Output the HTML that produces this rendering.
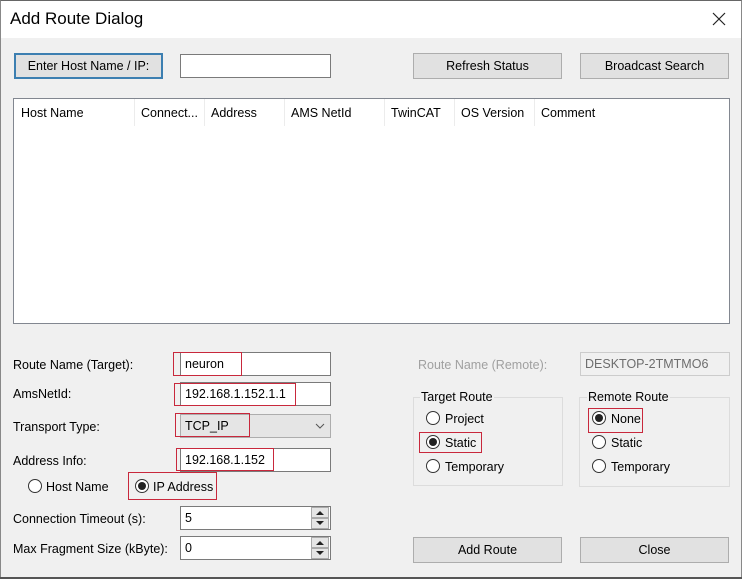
<!DOCTYPE html>
<html><head><style>
*{box-sizing:border-box;margin:0;padding:0}
body{width:742px;height:579px;overflow:hidden;background:#f0f0f0;font-family:"Liberation Sans",sans-serif;font-size:12.5px;color:#000;position:relative}
.a{position:absolute;white-space:nowrap}
.title{left:0;top:0;width:742px;height:38px;background:#fff;border-left:1px solid #888;border-right:1px solid #888;border-top:1px solid #666}
.btn{position:absolute;background:#e1e1e1;border:1px solid #adadad;text-align:center;line-height:24px}
.inp{position:absolute;background:#fff;border:1px solid #7a7a7a;padding-left:4px;line-height:23px}
.red{position:absolute;border:1px solid #c8283c}
.lbl{position:absolute;line-height:16px}
.rad{position:absolute;width:14px;height:14px;border:1px solid #333;border-radius:50%;background:#fff}
.rad.on::after{content:"";position:absolute;left:2px;top:2px;width:8px;height:8px;border-radius:50%;background:#222}
.grp{position:absolute;border:1px solid #dcdcdc}
.gt{position:absolute;background:#f0f0f0;padding:0 1px;line-height:16px}
.sep{position:absolute;top:99px;width:1px;height:27px;background:#ececec}
</style></head><body>
<div class="a title"></div>
<div class="a" style="left:10px;top:9px;font-size:17px">Add Route Dialog</div>
<svg class="a" style="left:712px;top:12px" width="14" height="14"><path d="M1 1L13 13M13 1L1 13" stroke="#222" stroke-width="1.2"/></svg>
<div class="a" style="left:0;top:38px;width:1px;height:541px;background:#888"></div>
<div class="a" style="left:741px;top:38px;width:1px;height:541px;background:#888"></div>

<div class="btn" style="left:14px;top:53px;width:149px;height:26px;border:2px solid #3c7fb1;line-height:22px">Enter Host Name / IP:</div>
<div class="inp" style="left:180px;top:54px;width:151px;height:24px"></div>
<div class="btn" style="left:413px;top:53px;width:149px;height:26px">Refresh Status</div>
<div class="btn" style="left:580px;top:53px;width:149px;height:26px">Broadcast Search</div>

<div class="a" style="left:13px;top:98px;width:717px;height:226px;background:#fff;border:1px solid #828790"></div>
<div class="sep" style="left:134px"></div><div class="sep" style="left:204px"></div><div class="sep" style="left:284px"></div><div class="sep" style="left:384px"></div><div class="sep" style="left:454px"></div><div class="sep" style="left:534px"></div>
<div class="lbl" style="left:21px;top:105px">Host Name</div>
<div class="lbl" style="left:141px;top:105px">Connect...</div>
<div class="lbl" style="left:211px;top:105px">Address</div>
<div class="lbl" style="left:291px;top:105px">AMS NetId</div>
<div class="lbl" style="left:391px;top:105px">TwinCAT</div>
<div class="lbl" style="left:461px;top:105px">OS Version</div>
<div class="lbl" style="left:541px;top:105px">Comment</div>

<div class="lbl" style="left:13px;top:357px">Route Name (Target):</div>
<div class="lbl" style="left:13px;top:386px">AmsNetId:</div>
<div class="lbl" style="left:13px;top:419px">Transport Type:</div>
<div class="lbl" style="left:13px;top:453px">Address Info:</div>
<div class="lbl" style="left:13px;top:511px">Connection Timeout (s):</div>
<div class="lbl" style="left:13px;top:541px">Max Fragment Size (kByte):</div>

<div class="inp" style="left:180px;top:352px;width:151px;height:24px">neuron</div>
<div class="inp" style="left:180px;top:382px;width:151px;height:24px">192.168.1.152.1.1</div>
<div class="inp" style="left:180px;top:414px;width:151px;height:24px;background:#e5e5e5;border-color:#adadad">TCP_IP</div>
<svg class="a" style="left:315px;top:422px" width="10" height="8"><path d="M1 2L5 6L9 2" stroke="#555" fill="none"/></svg>
<div class="inp" style="left:180px;top:448px;width:151px;height:24px">192.168.1.152</div>
<div class="inp" style="left:180px;top:506px;width:151px;height:24px">5</div>
<div class="inp" style="left:180px;top:536px;width:151px;height:24px">0</div>
<svg class="a" style="left:311px;top:507px" width="18" height="22"><rect x="0.5" y="0.5" width="17" height="10" fill="#e5e5e5" stroke="#aaa"/><rect x="0.5" y="11.5" width="17" height="10" fill="#e5e5e5" stroke="#aaa"/><path d="M5 8L9 4L13 8ZM5 14L9 18L13 14Z" fill="#222"/></svg>
<svg class="a" style="left:311px;top:537px" width="18" height="22"><rect x="0.5" y="0.5" width="17" height="10" fill="#e5e5e5" stroke="#aaa"/><rect x="0.5" y="11.5" width="17" height="10" fill="#e5e5e5" stroke="#aaa"/><path d="M5 8L9 4L13 8ZM5 14L9 18L13 14Z" fill="#222"/></svg>

<div class="red" style="left:173px;top:352px;width:69px;height:24px"></div>
<div class="red" style="left:174px;top:383px;width:122px;height:23px"></div>
<div class="red" style="left:175px;top:413px;width:75px;height:24px"></div>
<div class="red" style="left:176px;top:448px;width:98px;height:23px"></div>
<div class="red" style="left:128px;top:472px;width:89px;height:28px"></div>

<div class="rad" style="left:28px;top:479px"></div><div class="lbl" style="left:46px;top:479px">Host Name</div>
<div class="rad on" style="left:135px;top:479px"></div><div class="lbl" style="left:153px;top:479px">IP Address</div>

<div class="lbl" style="left:418px;top:357px;color:#a0a0a0">Route Name (Remote):</div>
<div class="inp" style="left:580px;top:352px;width:150px;height:24px;background:#f0f0f0;border-color:#ccc;color:#6d6d6d">DESKTOP-2TMTMO6</div>

<div class="grp" style="left:413px;top:397px;width:150px;height:89px"></div>
<div class="gt" style="left:420px;top:389px">Target Route</div>
<div class="rad" style="left:426px;top:411px"></div><div class="lbl" style="left:445px;top:411px">Project</div>
<div class="rad on" style="left:426px;top:435px"></div><div class="lbl" style="left:445px;top:435px">Static</div>
<div class="rad" style="left:426px;top:459px"></div><div class="lbl" style="left:445px;top:459px">Temporary</div>
<div class="red" style="left:419px;top:432px;width:63px;height:21px"></div>

<div class="grp" style="left:579px;top:397px;width:151px;height:90px"></div>
<div class="gt" style="left:587px;top:389px">Remote Route</div>
<div class="rad on" style="left:592px;top:411px"></div><div class="lbl" style="left:611px;top:411px">None</div>
<div class="rad" style="left:592px;top:435px"></div><div class="lbl" style="left:611px;top:435px">Static</div>
<div class="rad" style="left:592px;top:459px"></div><div class="lbl" style="left:611px;top:459px">Temporary</div>
<div class="red" style="left:588px;top:408px;width:55px;height:25px"></div>

<div class="btn" style="left:413px;top:537px;width:149px;height:26px">Add Route</div>
<div class="btn" style="left:580px;top:537px;width:149px;height:26px">Close</div>
<div class="a" style="left:0;top:577px;width:742px;height:2px;background:#555"></div>
</body></html>
